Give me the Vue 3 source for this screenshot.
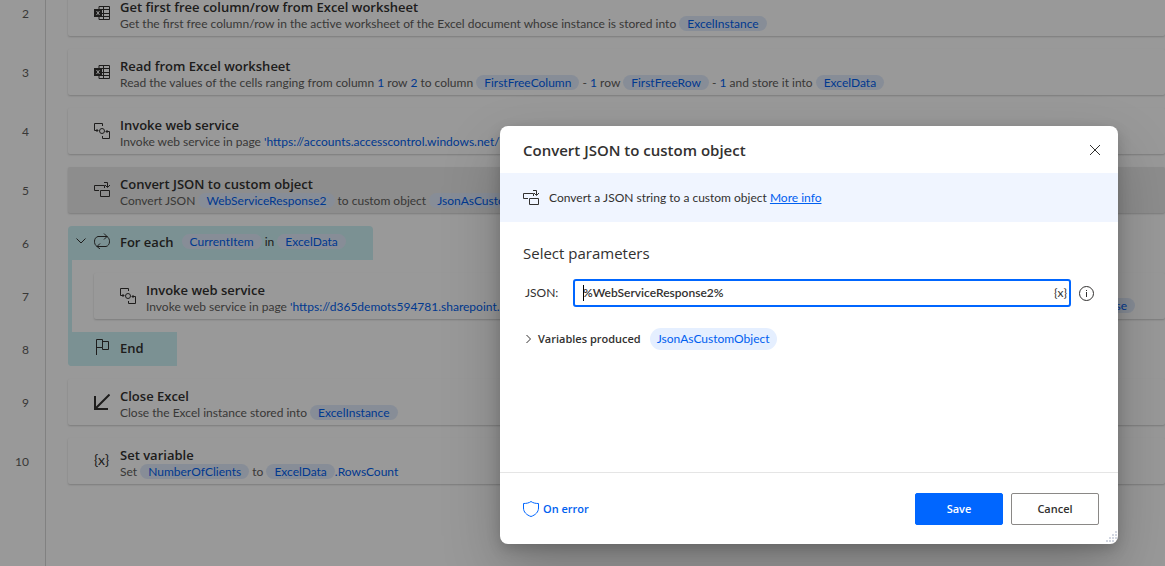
<script setup>
import { ref } from 'vue'

const json = ref('%WebServiceResponse2%')

const t = (text) => ({ kind: 'plain', text })
const v = (text) => ({ kind: 'value', text })
const p = (text) => ({ kind: 'pill', text })

const steps = [
  {
    n: 2, icon: 'excel', title: 'Get first free column/row from Excel worksheet',
    parts: [t('Get the first free column/row in the active worksheet of the Excel document whose instance is stored into '), p('ExcelInstance')],
  },
  {
    n: 3, icon: 'excel', title: 'Read from Excel worksheet',
    parts: [
      t('Read the values of the cells ranging from column '), v('1'), t(' row '), v('2'), t(' to column '),
      p('FirstFreeColumn'), t(' - '), v('1'), t(' row '), p('FirstFreeRow'), t(' - '), v('1'),
      t(' and store it into '), p('ExcelData'),
    ],
  },
  {
    n: 4, icon: 'web', title: 'Invoke web service',
    parts: [t('Invoke web service in page '), v("'https://accounts.accesscontrol.windows.net/")],
  },
  {
    n: 5, icon: 'convert', title: 'Convert JSON to custom object', selected: true,
    parts: [t('Convert JSON '), p('WebServiceResponse2'), t(' to custom object '), p('JsonAsCustomObject')],
  },
  { n: 6, icon: 'loop', title: 'For each', block: 'start', parts: [p('CurrentItem'), t(' in '), p('ExcelData')] },
  {
    n: 7, icon: 'web', title: 'Invoke web service', nested: true, tail: 'WebServiceResponse',
    parts: [t('Invoke web service in page '), v("'https://d365demots594781.sharepoint.")],
  },
  { n: 8, icon: 'flag', title: 'End', block: 'end', parts: [] },
  {
    n: 9, icon: 'close', title: 'Close Excel',
    parts: [t('Close the Excel instance stored into '), p('ExcelInstance')],
  },
  {
    n: 10, icon: 'var', title: 'Set variable',
    parts: [t('Set '), p('NumberOfClients'), t(' to '), p('ExcelData'), v('.RowsCount')],
  },
]

const icons = {
  web: 'M8.5 3V.5H.5V7.5H4M2.5 6 4 7.5 2.5 9M12 8.5H15.5V15.5H8.5V13M13.5 7 12 8.5 13.5 10M10.5 8A2.5 2.5 0 1 1 5.5 8A2.5 2.5 0 1 1 10.5 8',
  convert: 'M5 8.5H.5V3.5H10.5V6M6.5 8.5H15.5V14.5H6.5ZM10 .5H13.5V5M11 3 13.5 5.5 16 3',
  loop: 'M3 13.5C-.5 11.5-.5 4.5 4 3.5H13M10 .5 13 3.5 10 6.5M13 3.5C16.500 5.500 16.500 12.500 12 13.500H3M6 10.500 3 13.500 6 16',
  flag: 'M2.500 16V.5H8.500V8.500H2.500M8.500 2.500H14.500V10.500H8.500V8.500',
}
</script>

<template>
  <div class="designer">
    <ol class="flow">
      <li v-for="s in steps" :key="s.n" class="row" :class="[s.block, { nested: s.nested }]">
        <span class="num">{{ s.n }}</span>
        <div class="lane">
          <div class="card" :class="{ selected: s.selected, block: s.block }">
            <svg v-if="s.block === 'start'" class="chevron" viewBox="0 0 10 6"><path d="M.5 .5 5 5 9.500 .5" /></svg>
            <span v-if="s.icon === 'var'" class="icon varicon">{x}</span>
            <svg v-else-if="s.icon === 'excel'" class="icon" viewBox="0 0 16 16">
              <path d="M5 4V1.500H15.500V14.500H5V12M9.500 1.500V14.500M8 4.500H15.500M8 8.500H15.500M8 11.500H15.500" />
              <rect x="0" y="4" width="8" height="8" class="solid" />
              <path d="M2.500 6 5.500 10M5.500 6 2.500 10" class="mark" />
            </svg>
            <svg v-else-if="s.icon === 'close'" class="icon" viewBox="0 0 16 16">
              <path d="M15.500 .5 1.500 14.500M1 2V15H14" class="thick" />
            </svg>
            <svg v-else class="icon" viewBox="0 0 16 16"><path :d="icons[s.icon]" /></svg>
            <div class="body">
              <h3>{{ s.title }}</h3>
              <p v-if="s.parts.length"><span v-for="(x, i) in s.parts" :key="i" :class="x.kind">{{ x.text }}</span></p>
            </div>
            <span v-if="s.tail" class="tail"><span class="pill">{{ s.tail }}</span></span>
          </div>
        </div>
      </li>
    </ol>

    <div class="backdrop">
      <section class="dialog" role="dialog" aria-labelledby="dlg-title">
        <header>
          <h1 id="dlg-title">Convert JSON to custom object</h1>
          <button class="plainbtn" type="button" aria-label="Close">
            <svg width="10" height="10" viewBox="0 0 10 10"><path d="M0 0 10 10M10 0 0 10" /></svg>
          </button>
        </header>
        <div class="info">
          <svg class="icon" viewBox="0 0 16 16"><path :d="icons.convert" /></svg>
          <span>Convert a JSON string to a custom object <a href="#">More info</a></span>
        </div>
        <div class="content">
          <h2>Select parameters</h2>
          <div class="field">
            <label for="json">JSON:</label>
            <div class="box">
              <i class="caret"></i>
              <input id="json" v-model="json" type="text" />
              <button class="plainbtn varbtn" type="button" aria-label="Select variable">{x}</button>
            </div>
            <svg class="hint" viewBox="0 0 15 15"><circle cx="7.500" cy="7.500" r="7" /><path d="M7.500 6V11M7.500 4V5" /></svg>
          </div>
          <div class="produced">
            <button class="plainbtn" type="button">
              <svg width="5" height="8" viewBox="0 0 5 8"><path d="M.5 0 4.500 4 .5 8" /></svg>
              Variables produced
            </button>
            <span class="chip">JsonAsCustomObject</span>
          </div>
        </div>
        <footer>
          <button class="plainbtn onerror" type="button">
            <svg class="icon" viewBox="0 0 16 16"><path d="M8 .5C6 2 3.500 2.500 .5 2.500V7C.5 11 3.500 14 8 15.500C12.500 14 15.500 11 15.500 7V2.500C12.500 2.500 10 2 8 .5Z" /></svg>
            On error
          </button>
          <button class="btn primary" type="button">Save</button>
          <button class="btn" type="button">Cancel</button>
        </footer>
        <svg class="grip" viewBox="0 0 12 12">
          <path d="M10 1h2M7 4h2M10 4h2M4 7h2M7 7h2M10 7h2M1 10h2M4 10h2M7 10h2" />
        </svg>
      </section>
    </div>
  </div>
</template>

<style>
body {
  margin: 0;
}
</style>

<style scoped>
.designer {
  position: relative;
  height: 100vh;
  overflow: hidden;
  background: #fff;
  color: #323130;
  font-family: Lato, "Open Sans", sans-serif;
  font-size: 12px;
  line-height: 16px;
}
h1, h2, h3, p, ol {
  margin: 0;
  padding: 0;
}
svg {
  flex: none;
  fill: none;
  stroke: #323130;
  stroke-width: 1;
}
.icon {
  width: 16px;
  height: 16px;
}
.solid {
  fill: #323130;
  stroke: none;
}
.mark {
  stroke: #fff;
}
.thick {
  stroke-width: 2;
}
.flow {
  margin-top: -23px;
  min-height: calc(100vh + 23px);
  list-style: none;
  background: linear-gradient(#d8d8d8, #d8d8d8) 45px 0 / 1px 100% no-repeat;
}
.row {
  display: flex;
}
.num {
  flex: none;
  width: 29px;
  margin-right: 39px;
  align-self: center;
  padding-top: 15px;
  text-align: right;
  color: #605e5c;
}
.lane {
  flex: 1;
  min-width: 0;
  padding-top: 13px;
}
.card {
  position: relative;
  display: flex;
  align-items: center;
  height: 46px;
  padding-left: 26px;
  white-space: pre;
  border-radius: 2px;
  background: #fff;
  box-shadow: 0 1px 2px rgba(0, 0, 0, 0.2);
}
.selected {
  background: #ebebeb;
}
.body {
  padding-top: 3px;
  margin-left: 10px;
}
h3 {
  font-family: "Open Sans", sans-serif;
  font-size: 13px;
  line-height: 18px;
  font-weight: 600;
}
p {
  color: #605e5c;
}
.value {
  color: #0060f0;
}
.pill {
  padding: 0 8px;
  border-radius: 8px;
  background: #e2ecfc;
  color: #0060f0;
}
.varicon {
  font-size: 14px;
  line-height: 14px;
}
.varbtn {
  font-size: 14px;
}
.tail {
  position: absolute;
  right: 30px;
  bottom: 5px;
}
.card.block {
  height: 34px;
  background: #cdf2f5;
  box-shadow: none;
}
.block .body {
  display: flex;
  align-items: center;
  padding: 0 0 2px;
}
.block p {
  margin-left: 8px;
  color: #323130;
}
.block .icon {
  margin-bottom: 4px;
}
.start .card {
  width: 279px;
  border-radius: 4px 4px 0 0;
}
.end .card {
  width: 83px;
  border-radius: 0 0 0 4px;
}
.end .lane,
.nested .lane {
  background: linear-gradient(#cdf2f5, #cdf2f5) 0 0 / 4px 100% no-repeat;
}
.end .lane {
  border-radius: 0 0 0 4px;
}
.nested .lane {
  padding-left: 26px;
}
.chevron {
  position: absolute;
  left: 8px;
  top: 12px;
  width: 10px;
  height: 6px;
}
.backdrop {
  position: absolute;
  inset: 0;
  display: flex;
  padding: 126px 47px 22px 500px;
  background: rgba(0, 0, 0, 0.4);
}
.dialog {
  position: relative;
  display: flex;
  flex: 1;
  flex-direction: column;
  min-width: 0;
  overflow: hidden;
  border-radius: 8px;
  background: #fff;
  box-shadow: 0 26px 58px rgba(0, 0, 0, 0.22), 0 5px 14px rgba(0, 0, 0, 0.18);
}
header {
  display: flex;
  align-items: center;
  justify-content: space-between;
  height: 47px;
  padding: 0 18px 0 23px;
}
h1 {
  font-family: "Open Sans", sans-serif;
  font-size: 15px;
  line-height: 22px;
  font-weight: 600;
}
.plainbtn {
  display: flex;
  align-items: center;
  padding: 0;
  border: 0;
  background: none;
  color: #323130;
  font: inherit;
}
.info {
  display: flex;
  align-items: center;
  gap: 10px;
  height: 49px;
  padding: 0 23px;
  background: #f0f5ff;
}
a {
  color: #0060f0;
}
.content {
  flex: 1;
  padding: 20px 24px 0 23px;
}
h2 {
  font-family: "Open Sans", sans-serif;
  font-size: 15px;
  line-height: 22px;
  font-weight: 400;
}
.field {
  display: flex;
  align-items: center;
  margin-top: 15px;
}
label {
  width: 48px;
  padding-left: 2px;
}
.box {
  position: relative;
  display: flex;
  flex: 1;
  align-items: center;
  height: 24px;
  padding: 0 2px 0 8px;
  border: 2px solid #0066ff;
  border-radius: 3px;
}
.box input {
  flex: 1;
  min-width: 0;
  padding: 0;
  border: 0;
  outline: 0;
  background: none;
  color: #323130;
  font: inherit;
  font-weight: 600;
}
.caret {
  position: absolute;
  left: 8px;
  top: 4px;
  width: 1px;
  height: 16px;
  background: #000;
}
.hint {
  width: 15px;
  height: 15px;
  margin-left: 8px;
}
.produced {
  display: flex;
  align-items: center;
  gap: 9px;
  margin-top: 21px;
}
.produced .plainbtn,
.onerror,
.btn {
  font-family: "Open Sans", sans-serif;
  font-size: 11px;
  font-weight: 600;
}
.produced .plainbtn {
  gap: 7px;
  padding-left: 3px;
}
.chip {
  padding: 3px 7px;
  border-radius: 11px;
  background: #e5efff;
  color: #0060f0;
}
footer {
  display: flex;
  align-items: center;
  gap: 8px;
  height: 71px;
  padding: 0 19px 0 23px;
  border-top: 1px solid #e5e5e5;
}
.onerror {
  gap: 4px;
  margin-right: auto;
  color: #0060f0;
}
.onerror svg {
  stroke: #0066ff;
}
.btn {
  width: 88px;
  height: 32px;
  border: 1px solid #8a8886;
  border-radius: 2px;
  background: #fff;
  color: #323130;
}
.btn.primary {
  border-color: #0066ff;
  background: #0066ff;
  color: #fff;
}
.grip {
  position: absolute;
  right: 1px;
  bottom: 1px;
  width: 12px;
  height: 12px;
  stroke: #a8b0c4;
}
</style>
